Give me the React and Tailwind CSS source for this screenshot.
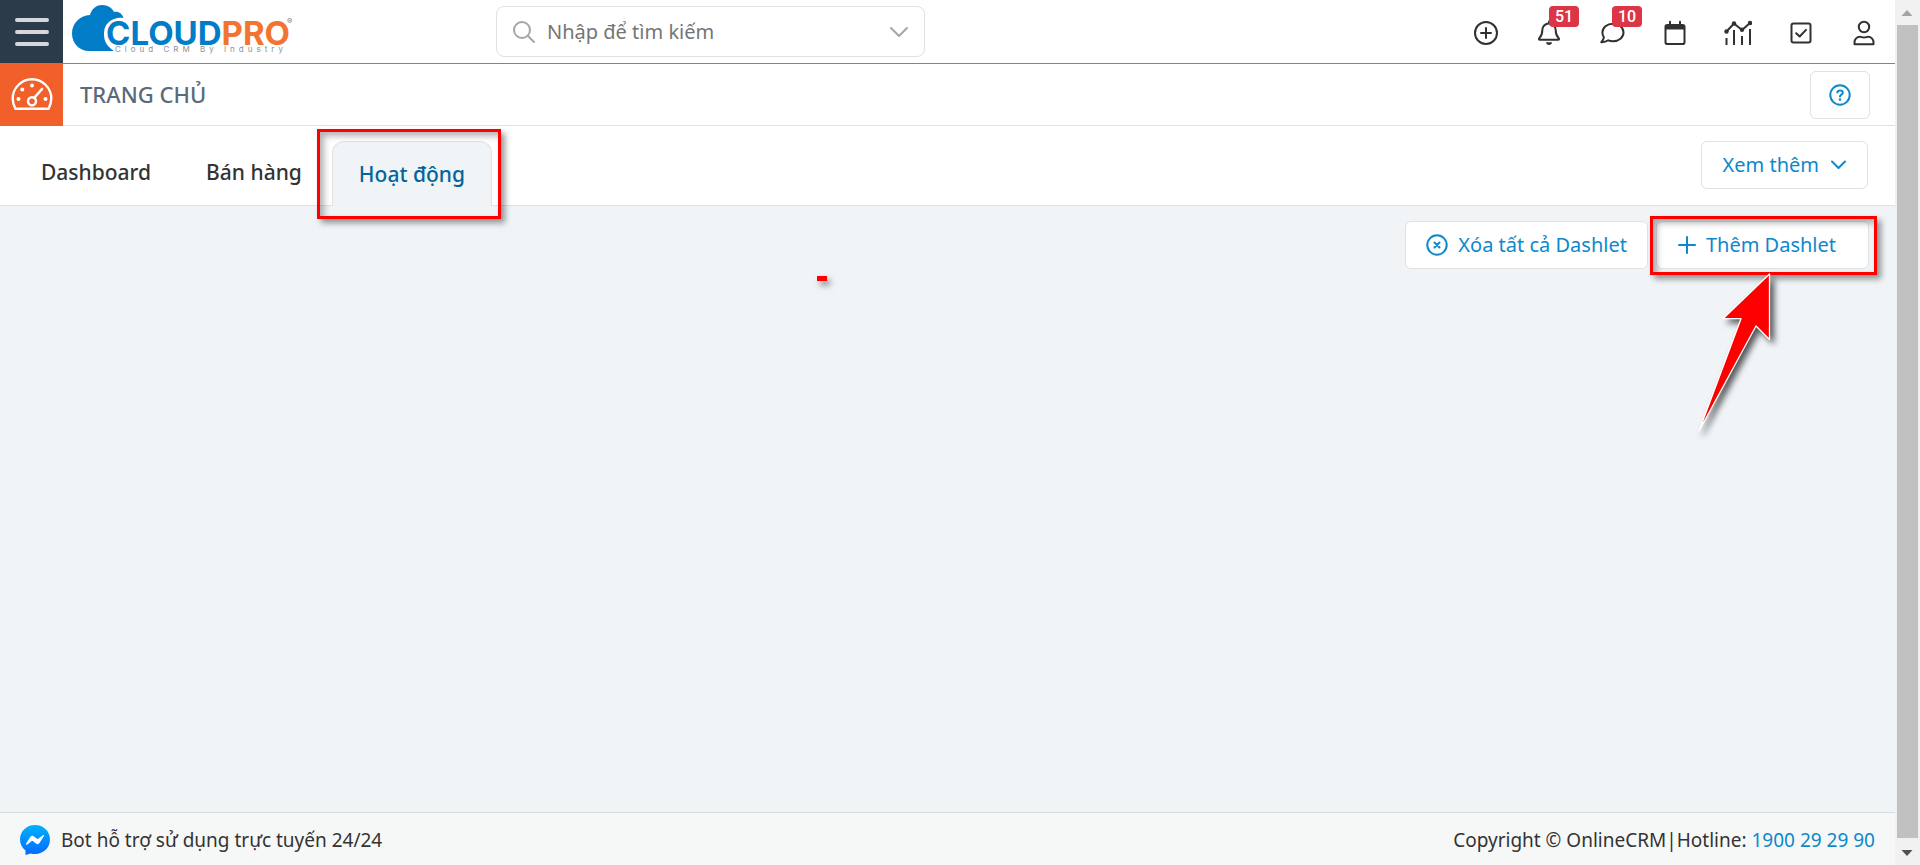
import React from "react";

const line = {
  fill: "none",
  stroke: "currentColor",
  strokeWidth: 2,
  strokeLinecap: "round",
  strokeLinejoin: "round",
  "aria-hidden": true,
};

function Logo() {
  return (
    <svg width="224" height="54" viewBox="0 0 224 54" role="img" aria-label="CloudPro">
      <path
        fill="#007dc6"
        d="M18 51C8 51 1 43 1 33.500C1 23.500 8.500 15.500 19 15C21 8 26 5 31 5C37 5 41 8 43 12C47 11 51 13 52.500 18C43 16.500 35.500 22 33.500 29C31.500 39 35 46 43 51Z"
      />
      <text x="35" y="45" fill="#007dc6" className="font-[Inter] text-[33px] font-bold">
        CLOUD<tspan fill="#f37430">PRO</tspan>
      </text>
      <text x="44" y="52" fill="#8c8f94" className="font-[Inter] text-[8px] tracking-[4px]">
        Cloud CRM By Industry
      </text>
      <text x="216" y="24" fill="#77797d" className="font-[Inter] text-[8px]">
        ®
      </text>
    </svg>
  );
}

function GaugeIcon() {
  return (
    <svg width="42" height="34" viewBox="0 0 42 34" {...line} strokeWidth="2.400">
      <path d="M4.500 31.800h33c1.800-3 2.800-6.500 2.800-10.200C40.300 11 31.700 2.300 21 2.300S1.700 11 1.700 21.600c0 3.700 1 7.200 2.800 10.200Z" />
      <circle cx="21" cy="24.300" r="4" />
      <path d="m23.500 20.500 7.500-8.500" strokeWidth="2.600" />
      <g fill="currentColor" stroke="none">
        <circle cx="7.500" cy="22" r="2" />
        <circle cx="11.300" cy="12.500" r="2" />
        <circle cx="21" cy="8.500" r="2" />
        <circle cx="34.500" cy="22" r="2" />
      </g>
    </svg>
  );
}

const PlusCircle = () => (
  <svg width="26" height="26" viewBox="0 0 26 26" {...line}>
    <circle cx="13" cy="13" r="11" />
    <path d="M13 8v10M8 13h10" />
  </svg>
);
const Bell = () => (
  <svg width="26" height="26" viewBox="0 0 26 26" {...line}>
    <path d="M13 1.500v2M13 3.500c-4 0-6.700 3-6.700 6.700 0 4.500-1.300 6.300-3 8-.7.700-.300 1.600.6 1.600h18.200c.9 0 1.300-.900.600-1.600-1.700-1.700-3-3.500-3-8C19.700 6.500 17 3.500 13 3.500Z" />
    <path d="M10 22.200h6c-.2 1.700-1.400 2.800-3 2.800s-2.800-1.100-3-2.800Z" fill="currentColor" stroke="none" />
  </svg>
);
const Comment = () => (
  <svg width="26" height="26" viewBox="0 0 26 26" {...line}>
    <path d="M14 3.800c6 0 10.500 3.800 10.500 8.700S20 21.200 14 21.200c-1.700 0-3.300-.300-4.700-.900-2 1.400-4.500 2-7 1.900 1.300-1.400 2.300-3 2.600-4.800-1-1.400-1.500-3.100-1.500-4.900 0-4.900 4.600-8.700 10.600-8.700Z" />
  </svg>
);
const Calendar = () => (
  <svg width="26" height="26" viewBox="0 0 26 26" {...line}>
    <rect x="3.500" y="5" width="19" height="19" rx="1.800" />
    <path d="M3.500 5h19v4.500h-19Z" fill="currentColor" stroke="none" />
    <path d="M8 1.800v3M18 1.800v3" />
  </svg>
);
const Chart = () => (
  <svg width="28" height="26" viewBox="0 0 28 26" {...line} strokeLinecap="butt">
    <path d="m2.500 11.500 7.500-8 8 6.500 8-7" />
    <path d="M2.500 18v7M10 10v15M18 16v9M26 9v16" />
    <g fill="currentColor" stroke="none">
      <circle cx="2.500" cy="11.500" r="2.200" />
      <circle cx="10" cy="3.500" r="2.200" />
      <circle cx="18" cy="9.800" r="2.200" />
      <circle cx="26" cy="3" r="2.200" />
    </g>
  </svg>
);
const CheckSquare = () => (
  <svg width="26" height="26" viewBox="0 0 26 26" {...line}>
    <rect x="3.500" y="3.500" width="19" height="19" rx="2" />
    <path d="m8.200 13.200 3.500 3.300 6.300-6.600" />
  </svg>
);
const User = () => (
  <svg width="26" height="26" viewBox="0 0 26 26" {...line}>
    <circle cx="13" cy="7" r="5.200" />
    <path d="M3.500 24.200v-2c0-3 2.400-5.400 5.400-5.400 1.300 0 2.200.700 4.100.700s2.800-.7 4.100-.7c3 0 5.400 2.400 5.400 5.400v2Z" />
  </svg>
);

const tools = [
  { label: "Thêm nhanh", Icon: PlusCircle },
  { label: "Thông báo", Icon: Bell, badge: 51 },
  { label: "Tin nhắn", Icon: Comment, badge: 10 },
  { label: "Lịch", Icon: Calendar },
  { label: "Báo cáo", Icon: Chart },
  { label: "Công việc", Icon: CheckSquare },
  { label: "Tài khoản", Icon: User },
];

function Highlight({ className }) {
  return (
    <span
      className={
        "pointer-events-none absolute border-[3px] border-[#ff0000] shadow-[4px_4px_6px_rgba(0,0,0,0.4),inset_4px_4px_6px_rgba(0,0,0,0.3)] " +
        className
      }
    />
  );
}

function Arrow() {
  return (
    <svg
      className="pointer-events-none absolute top-[50px] left-[38px]"
      width="90"
      height="172"
      viewBox="0 0 90 172"
      aria-hidden="true"
    >
      <path
        d="M75.500 3 29 47.700h18L5 160 62 55l13.500 13.500Z"
        fill="#ff0000"
        stroke="#ffffff"
        strokeWidth="1.300"
        strokeLinejoin="round"
        className="drop-shadow-[4px_4px_3px_rgba(0,0,0,0.65)]"
      />
    </svg>
  );
}

const outline =
  "flex h-12 items-center rounded-md border border-[#dfe1e3] bg-white text-[20px] text-[#0d88cc]";

export default function App() {
  return (
    <div className="flex min-h-screen bg-[#f0f4f7] font-['Noto_Sans',sans-serif] text-[19px] text-[#333333]">
      <div className="flex min-w-0 flex-1 flex-col">
        <header className="flex h-16 border-b border-[#ee5f2b] bg-white">
          <button aria-label="Menu" className="flex w-[63px] shrink-0 items-center justify-center bg-[#2c3b49] text-[#d5d8db]">
            <svg width="36" height="30" viewBox="0 0 36 30" {...line} strokeWidth="4">
              <path d="M3 3h30M3 15h30M3 27h30" />
            </svg>
          </button>
          <a href="#home" className="w-[433px] shrink-0 pl-2">
            <Logo />
          </a>
          <div className="mt-1.5 flex h-[51px] w-[429px] items-center rounded-lg border border-[#dfe1e3] px-4">
            <svg width="22" height="22" viewBox="0 0 22 22" {...line} className="shrink-0 text-[#a4a7aa]">
              <circle cx="9" cy="9" r="8" />
              <path d="m15 15 6 6" />
            </svg>
            <input
              aria-label="Nhập để tìm kiếm"
              placeholder="Nhập để tìm kiếm"
              className="ml-3 min-w-0 flex-1 bg-transparent text-[20px] outline-none placeholder:text-[#757575]"
            />
            <button aria-label="Mở bộ lọc" className="text-[#a4a7aa]">
              <svg width="18" height="12" viewBox="0 0 18 12" {...line}>
                <path d="m1 2 8 8 8-8" />
              </svg>
            </button>
          </div>
          <nav className="ml-auto flex pt-[3px] text-[#2f3133]">
            {tools.map(({ label, Icon, badge }) => (
              <button key={label} aria-label={label} className="relative flex w-[63px] items-center justify-center">
                <Icon />
                {badge && (
                  <span className="absolute top-[3px] left-8 rounded bg-[#dc3545] px-1.5 font-[Roboto] text-[16px] leading-[21px] font-medium text-white">
                    {badge}
                  </span>
                )}
              </button>
            ))}
          </nav>
        </header>

        <div className="flex h-[62px] items-center border-b border-[#dfe1e3] bg-white pr-[25px]">
          <div className="-mt-px flex h-[63px] w-[63px] shrink-0 items-center justify-center self-start bg-[#f15f2a] pb-0.5 text-white">
            <GaugeIcon />
          </div>
          <h1 className="ml-[17px] text-[22px] font-medium text-[#596a7b]">TRANG CHỦ</h1>
          <button aria-label="Trợ giúp" className={outline + " ml-auto w-[60px] justify-center"}>
            <svg width="22" height="22" viewBox="0 0 22 22" {...line}>
              <circle cx="11" cy="11" r="9.700" />
              <path d="M8.300 8.500c.3-1.300 1.400-2 2.700-2 1.600 0 2.800 1 2.800 2.300 0 1.900-2.800 1.900-2.800 3.700" />
              <circle cx="11" cy="15.500" r=".7" fill="currentColor" strokeWidth="1.200" />
            </svg>
          </button>
        </div>

        <div className="flex h-20 items-end border-b border-[#dfe1e3] bg-white pr-[27px] pl-4">
          <nav className="flex items-end text-[21px] font-medium">
            <a href="#dashboard" className="flex h-16 items-center px-[25px]">Dashboard</a>
            <a href="#sales" className="flex h-16 items-center px-[30px]">Bán hàng</a>
            <a
              href="#activity"
              aria-current="page"
              className="relative -mb-px flex h-[65px] items-center rounded-t-xl border border-b-0 border-[#dfe1e3] bg-[#f0f4f7] px-[26px] pt-0.5 text-[#04659a]"
            >
              Hoạt động
              <Highlight className="-top-[13px] -right-[10px] -bottom-[13px] -left-4" />
            </a>
          </nav>
          <button className={outline + " mb-4 ml-auto gap-3 px-[21px]"}>
            Xem thêm
            <svg width="15" height="10" viewBox="0 0 15 10" {...line}>
              <path d="m1 1.500 6.500 6.500L14 1.500" />
            </svg>
          </button>
        </div>

        <main className="relative flex-1 pt-[15px] pr-[26px]">
          <div className="flex justify-end gap-2">
            <button className={outline + " gap-2.5 px-5"}>
              <svg width="22" height="22" viewBox="0 0 22 22" {...line}>
                <circle cx="11" cy="11" r="9.700" />
                <path d="m8.500 8.500 5 5M13.500 8.500l-5 5" />
              </svg>
              Xóa tất cả Dashlet
            </button>
            <div className="relative">
              <button className={outline + " gap-2.5 pr-8 pl-[21px]"}>
                <svg width="18" height="18" viewBox="0 0 18 18" {...line}>
                  <path d="M9 1v16M1 9h16" />
                </svg>
                Thêm Dashlet
              </button>
              <Highlight className="-top-[5px] -right-2 -bottom-1.5 -left-1.5" />
              <Arrow />
            </div>
          </div>
          <span className="absolute top-[70px] left-[817px] h-[5px] w-2.5 bg-[#ff0000] shadow-[3px_4px_6px_rgba(0,0,0,0.5)]" />
        </main>

        <footer className="flex h-[53px] items-center justify-between border-t border-[#d9dcde] bg-[#f6f8f7] pt-0.5 pr-5 pl-5">
          <a href="#bot" className="flex items-center gap-[11px]">
            <svg width="30" height="30" viewBox="0 0 30 30" aria-hidden="true">
              <defs>
                <linearGradient id="chat" x1="0" y1="0" x2="0" y2="1">
                  <stop offset="0" stopColor="#00b2ff" />
                  <stop offset="1" stopColor="#006aff" />
                </linearGradient>
              </defs>
              <path fill="url(#chat)" d="M15 0c8.500 0 15 6.200 15 14.600S23.500 29 15 29c-1.500 0-3-.2-4.400-.6L5.500 30v-4.500C2 22.800 0 19 0 14.600 0 6.200 6.500 0 15 0Z" />
              <path fill="#ffffff" d="m6 18.800 4.400-7c.7-1.100 2.200-1.400 3.200-.6l3.500 2.600c.3.200.8.200 1.100 0l4.700-3.600c.6-.5 1.500.300 1 .9l-4.400 7c-.7 1.100-2.200 1.400-3.200.6l-3.500-2.600c-.3-.2-.8-.2-1.100 0L7 19.700c-.6.500-1.400-.300-1-.9Z" />
            </svg>
            Bot hỗ trợ sử dụng trực tuyến 24/24
          </a>
          <p>
            Copyright © OnlineCRM|Hotline:{" "}
            <a href="tel:1900292990" className="text-[#0d88cc]">1900 29 29 90</a>
          </p>
        </footer>
      </div>

      <div aria-hidden="true" className="flex w-[25px] shrink-0 flex-col items-center bg-[#f1f1f1]">
        <svg width="25" height="25" viewBox="0 0 25 25">
          <path d="M6.500 16h11L12 10Z" fill="#a3a3a3" />
        </svg>
        <div className="w-[21px] flex-1 bg-[#c1c1c1]" />
        <svg width="25" height="27" viewBox="0 0 25 27">
          <path d="M6.500 12h11L12 18Z" fill="#505050" />
        </svg>
      </div>
    </div>
  );
}
